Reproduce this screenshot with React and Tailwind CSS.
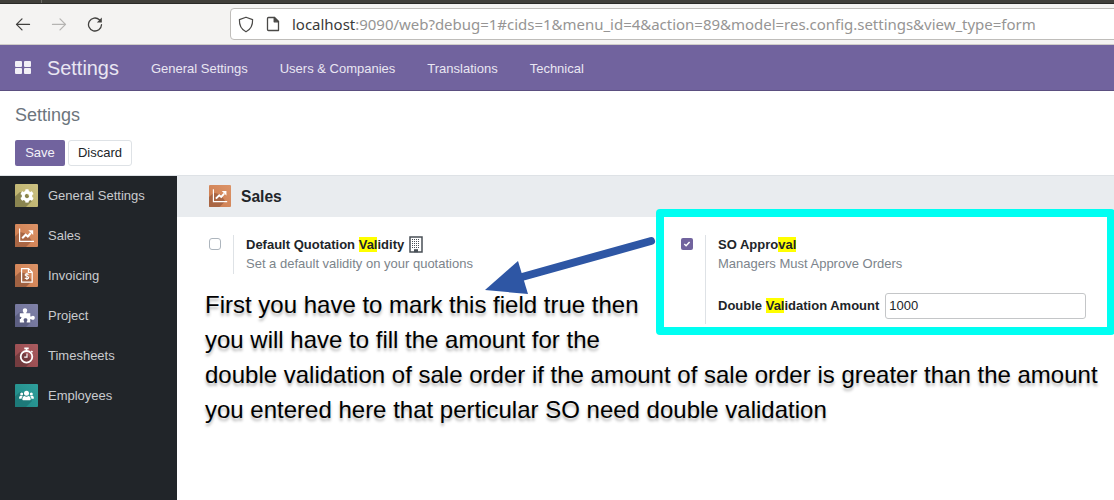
import React from 'react';
import { FaCog } from 'react-icons/fa';

const SalesGlyph = () => (
  <svg viewBox="0 0 23 23" className="relative size-full" fill="none">
    <path d="M4.600 4.500v12.900h14.400" stroke="#fff" strokeWidth="1.200" />
    <path d="M7.200 14.300l3.500-3.600 2.100 1.800 3-3.500" stroke="#fff" strokeWidth="2" />
    <path d="M13.300 6.200h4.900v4.900z" fill="#fff" />
  </svg>
);

const InvoiceGlyph = () => (
  <svg viewBox="0 0 23 23" className="relative size-full" fill="none">
    <path d="M6.600 4.600h7l3.600 3.600v9.900H6.600z M13.400 4.600v3.800h3.800" stroke="#fff" strokeWidth="1.200" />
    <path d="M13.600 10.600c-.5-.6-1-.8-1.800-.8-1.100 0-1.700.5-1.700 1.200 0 1.700 3.600.8 3.600 2.500 0 .8-.7 1.300-1.800 1.300-.9 0-1.600-.3-2.100-.9M11.900 8.700v7.300" stroke="#fff" strokeWidth="1.100" />
  </svg>
);

const PuzzleGlyph = () => (
  <svg viewBox="0 0 23 23" className="relative size-full" fill="#fff">
    <path d="M4.800 9.300h3.900c.4-.9-.9-1.500-.9-2.900 0-1.300.9-2.100 2.200-2.100s2.200.8 2.200 2.100c0 1.400-1.300 2-.9 2.900h4v3.200c.9.400 1.500-.8 2.600-.8 1.200 0 1.900.8 1.900 2s-.7 2.100-1.900 2.100c-1.100 0-1.700-1.200-2.600-.8v3.400h-3.500c-.7-.8.6-1.300.6-2.500 0-1-.8-1.600-1.900-1.600s-1.900.6-1.900 1.600c0 1.200 1.100 1.700.5 2.500H4.800v-3.400c.9-.5 1.700.2 1.700-1.100s-.8-.8-1.700-1.200z" />
  </svg>
);

const TimerGlyph = () => (
  <svg viewBox="0 0 23 23" className="relative size-full" fill="none">
    <circle cx="11.500" cy="12.800" r="5.800" stroke="#fff" strokeWidth="1.800" />
    <path d="M9.300 4.400h4.400M11.500 4.400v3M16.300 7l1.200 1.200" stroke="#fff" strokeWidth="1.600" />
    <path d="M12 9.600v3.600H9.200" stroke="#fff" strokeWidth="1.200" />
  </svg>
);

const PeopleGlyph = () => (
  <svg viewBox="0 0 23 23" className="relative size-full" fill="#fff">
    <circle cx="11.500" cy="9.300" r="2.500" />
    <circle cx="6.700" cy="10" r="1.500" />
    <circle cx="16.300" cy="10" r="1.500" />
    <path d="M7.400 15.900c-.3-2.600 1-3.900 2.200-3.900 1.200.9 2.600.9 3.800 0 1.200 0 2.500 1.300 2.200 3.900-1.200.6-7 .6-8.200 0z" />
    <path d="M4.200 14.800c-.3-2.200.6-3.100 1.400-3.100.7.400 1.500.4 2.200.2-.8.800-1.200 1.700-1.200 2.900zM18.800 14.800c.3-2.200-.6-3.100-1.400-3.100-.7.400-1.500.4-2.200.2.800.8 1.200 1.700 1.200 2.900z" />
  </svg>
);

const AppIcon = ({ tone, shade, small, children }) => (
  <span className={`relative flex shrink-0 items-center justify-center overflow-hidden rounded-[1px] text-white ${small ? 'size-[22px] -mt-0.5' : 'size-[23px] -mt-px'} ${tone}`}>
    <svg viewBox="0 0 23 23" className="absolute inset-0 size-full">
      <path d="M0 12.500L5 8l7 2 5 7-6 6H0z" fill={shade} />
    </svg>
    {children}
  </span>
);

const apps = [
  { name: 'General Settings', tone: 'bg-linear-to-bl from-[#cdc283] to-[#b9ae68]', shade: '#8a8550', icon: <FaCog className="relative size-[14px]" /> },
  { name: 'Sales', tone: 'bg-linear-to-bl from-[#dc9468] to-[#cb7a4d]', shade: '#a96644', icon: <SalesGlyph /> },
  { name: 'Invoicing', tone: 'bg-linear-to-bl from-[#dc9468] to-[#cb7a4d]', shade: '#a06242', icon: <InvoiceGlyph /> },
  { name: 'Project', tone: 'bg-linear-to-bl from-[#8082a8] to-[#6b6e94]', shade: '#5c5f82', icon: <PuzzleGlyph /> },
  { name: 'Timesheets', tone: 'bg-linear-to-bl from-[#ab5c60] to-[#914649]', shade: '#743c3f', icon: <TimerGlyph /> },
  { name: 'Employees', tone: 'bg-linear-to-bl from-[#2fa09c] to-[#1f8885]', shade: '#1d7a79', icon: <PeopleGlyph /> },
];

const Mark = ({ children }) => <span className="bg-[#ff0]">{children}</span>;

const Building = () => (
  <svg viewBox="0 0 14 17" className="h-[17px] w-[14px]" fill="none">
    <path d="M1 1h12v15H1z" stroke="#495057" strokeWidth="1.500" />
    <path d="M3 3.500h8M3 5.500h8M3 7.500h8M3 9.500h8M3 11.500h8" stroke="#495057" strokeWidth="1" strokeDasharray="1 1" />
    <path d="M5 13.200h4v3H5z" fill="#495057" />
  </svg>
);

function BrowserBar() {
  return (
    <header>
      <div className="h-1 border-b border-[#2a2a27] bg-[#403f3a]">
        <div className="ml-[41px] h-[3px] w-px bg-[#6b6a65]" />
      </div>
      <div className="flex h-[41px] items-center border-b border-[#cfccc8] bg-[#f4f3f2] pl-[15px]">
        <svg width="16" height="16" viewBox="0 0 16 16" fill="none" stroke="#42413f" strokeWidth="1.300" strokeLinecap="round" strokeLinejoin="round">
          <path d="M14.500 8.400H1.500M7 2.900L1.500 8.400 7 13.900" />
        </svg>
        <svg className="ml-5" width="16" height="16" viewBox="0 0 16 16" fill="none" stroke="#b5b4b2" strokeWidth="1.300" strokeLinecap="round" strokeLinejoin="round">
          <path d="M1.500 8.400h13M9 2.900l5.500 5.500L9 13.900" />
        </svg>
        <svg className="ml-5" width="16" height="16" viewBox="0 0 16 16" fill="none" stroke="#42413f" strokeWidth="1.300" strokeLinecap="round">
          <path d="M12.400 3.700A6.500 6.500 0 1 0 14.500 8.700" />
          <path d="M14.800 1.500v5H9.800z" fill="#42413f" stroke="none" />
        </svg>
        <div className="-mr-2 ml-[127px] flex h-8 grow items-center rounded border border-[#bfbdba] bg-white pl-[7px]">
          <svg width="16" height="17" viewBox="0 0 16 17" fill="none" stroke="#4a4947" strokeWidth="1.200" strokeLinejoin="round">
            <path d="M8 1.200l6.600 2.400c.2 5.300-1.500 9.800-6.600 12.200C2.900 13.400 1.200 8.900 1.400 3.600z" />
          </svg>
          <svg className="ml-3" width="14" height="16" viewBox="0 0 14 16" fill="none" stroke="#4a4947" strokeWidth="1.300" strokeLinejoin="round">
            <path d="M2.500 1.500h6l4 4v9h-10q-1 0-1-1v-11q0-1 1-1z" />
            <path d="M8.200 1.500v4.300h4.300z" fill="#4a4947" />
          </svg>
          <span className="ml-3 whitespace-nowrap font-['Noto_Sans',sans-serif] text-[15px] tracking-[-0.02px] text-[#969594]">
            <span className="text-[#3a3a39]">localhost</span>:9090/web?debug=1#cids=1&amp;menu_id=4&amp;action=89&amp;model=res.config.settings&amp;view_type=form
          </span>
        </div>
      </div>
    </header>
  );
}

export default function App() {
  return (
    <div className="relative flex h-[500px] w-[1114px] flex-col overflow-hidden bg-white font-['Liberation_Sans',Arial,sans-serif] text-[13px] leading-5 text-[#212529]">
      <BrowserBar />
      <nav className="flex h-[46px] shrink-0 items-center border-b border-[#5b4f80] bg-[#71639e] pl-[15px] text-[#e9e6f2]">
        <div className="grid grid-cols-2 gap-x-0.5 gap-y-px">
          {[0, 1, 2, 3].map((n) => <span key={n} className="h-1.5 w-[7px] rounded-[1px] bg-[#f1eff6]" />)}
        </div>
        <span className="ml-4 text-[19.900px]">Settings</span>
        <div className="ml-8 mt-0.5 flex gap-8">
          <span>General Settings</span>
          <span>Users &amp; Companies</span>
          <span>Translations</span>
          <span>Technical</span>
        </div>
      </nav>
      <section className="h-[85px] shrink-0 border-b border-[#dee2e6] px-[15px] pt-[14px]">
        <h1 className="text-[18px] leading-5 text-[#6c757d]">Settings</h1>
        <div className="mt-[15px] flex gap-[3px]">
          <button className="flex h-[26px] w-[50px] items-center justify-center rounded-[2px] bg-[#71639e] text-[#f3f1f8]">Save</button>
          <button className="flex h-[26px] w-16 items-center justify-center rounded-[3px] border border-[#dee2e6] bg-white">Discard</button>
        </div>
      </section>
      <div className="flex min-h-0 grow">
        <aside className="w-[177px] shrink-0 bg-[#212529] text-[#c9cbce]">
          {apps.map((app) => (
            <div key={app.name} className="flex h-10 items-center gap-[10px] pl-[15px]">
              <AppIcon tone={app.tone} shade={app.shade}>{app.icon}</AppIcon>
              <span>{app.name}</span>
            </div>
          ))}
        </aside>
        <main className="min-w-0 grow">
          <h2 className="flex h-[41px] items-center gap-[10px] bg-[#e9ecef] pl-8 text-[15.600px] font-bold">
            <AppIcon small tone="bg-linear-to-bl from-[#dc9468] to-[#cb7a4d]" shade="#a96644"><SalesGlyph /></AppIcon>
            Sales
          </h2>
          <div className="flex pl-8 pt-[18px]">
            <div className="flex w-[472px]">
              <span className="mt-[3px] size-3 rounded-[3px] border border-[#adb5bd]" />
              <div className="ml-3 h-[39px] border-l border-[#dee2e6] pl-3 leading-[19px]">
                <div className="flex items-center font-bold">
                  <span className="whitespace-pre">Default Quotation <Mark>Val</Mark>idity</span>
                  <span className="ml-[5px]"><Building /></span>
                </div>
                <div className="text-[#7c848b]">Set a default validity on your quotations</div>
              </div>
            </div>
            <div className="flex">
              <span className="mt-[3px] flex size-3 items-center justify-center rounded-[2px] bg-[#71639e]">
                <svg viewBox="0 0 8 8" className="size-2" fill="none"><path d="M1.300 4l1.800 1.700L6.600 2" stroke="#fff" strokeWidth="1.500" /></svg>
              </span>
              <div className="ml-3 h-[89px] border-l border-[#dee2e6] pl-3 leading-[19px]">
                <div className="font-bold">SO Appro<Mark>val</Mark></div>
                <div className="text-[#7c848b]">Managers Must Approve Orders</div>
                <div className="mt-5 flex items-start gap-[6px]">
                  <span className="mt-[3px] font-bold">Double <Mark>Val</Mark>idation Amount</span>
                  <input readOnly value="1000" className="h-[26px] w-[201px] rounded-[3px] border border-[#c4c6c8] pb-0.5 pl-[3px] outline-none" />
                </div>
              </div>
            </div>
          </div>
        </main>
      </div>

      <div className="absolute left-[656px] top-[209px] h-[126px] w-[459px] rounded-[4px] border-8 border-[#00fff2]" />
      <svg className="absolute left-[480px] top-[230px]" width="180" height="70" viewBox="0 0 180 70">
        <path d="M171 11L42 47" stroke="#2e56a4" strokeWidth="8" strokeLinecap="round" />
        <path d="M5 60L38 31l10 33z" fill="#2e56a4" />
      </svg>
      <p className="absolute left-[205px] top-[287px] whitespace-nowrap text-[24px] leading-[35px] text-black [text-shadow:0_3px_3px_rgba(0,0,0,0.3)]">
        First you have to mark this field true then<br />
        you will have to fill the amount for the<br />
        double validation of sale order if the amount of sale order is greater than the amount<br />
        you entered here that perticular SO need double validation
      </p>
    </div>
  );
}
